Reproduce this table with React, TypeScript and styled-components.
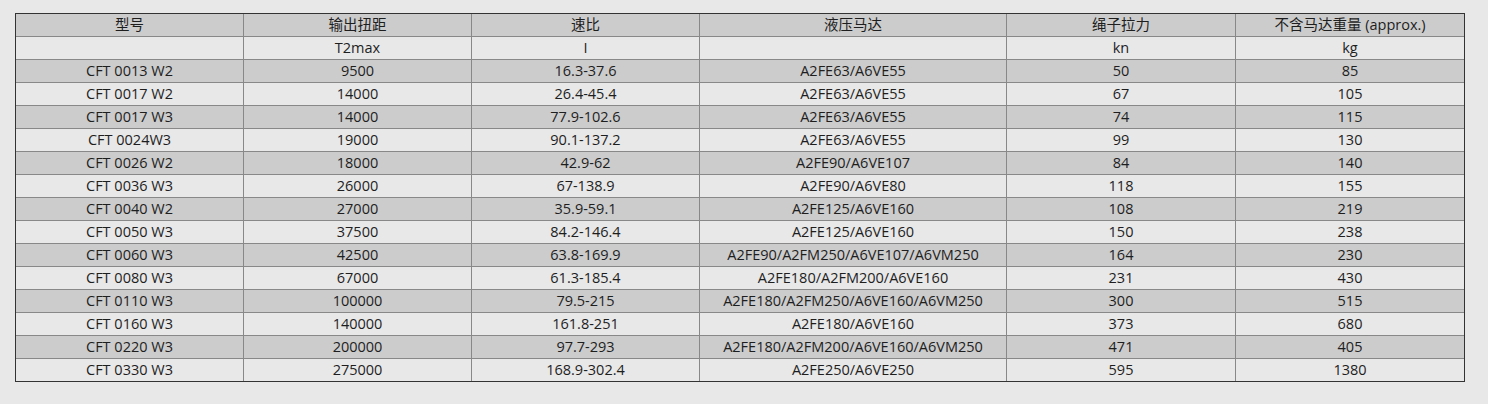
import React from 'react';
import styled, {createGlobalStyle} from "styled-components";

const GlobalStyle = createGlobalStyle`
    html, body {
        margin: 0;
        padding: 0;
        background-color: #E8E8E8;
    }
`;

type Row = [string, string, string, string, string, string];

const rows: Row[] = [
    ["CFT 0013 W2", "9500", "16.3-37.6", "A2FE63/A6VE55", "50", "85"],
    ["CFT 0017 W2", "14000", "26.4-45.4", "A2FE63/A6VE55", "67", "105"],
    ["CFT 0017 W3", "14000", "77.9-102.6", "A2FE63/A6VE55", "74", "115"],
    ["CFT 0024W3", "19000", "90.1-137.2", "A2FE63/A6VE55", "99", "130"],
    ["CFT 0026 W2", "18000", "42.9-62", "A2FE90/A6VE107", "84", "140"],
    ["CFT 0036 W3", "26000", "67-138.9", "A2FE90/A6VE80", "118", "155"],
    ["CFT 0040 W2", "27000", "35.9-59.1", "A2FE125/A6VE160", "108", "219"],
    ["CFT 0050 W3", "37500", "84.2-146.4", "A2FE125/A6VE160", "150", "238"],
    ["CFT 0060 W3", "42500", "63.8-169.9", "A2FE90/A2FM250/A6VE107/A6VM250", "164", "230"],
    ["CFT 0080 W3", "67000", "61.3-185.4", "A2FE180/A2FM200/A6VE160", "231", "430"],
    ["CFT 0110 W3", "100000", "79.5-215", "A2FE180/A2FM250/A6VE160/A6VM250", "300", "515"],
    ["CFT 0160 W3", "140000", "161.8-251", "A2FE180/A6VE160", "373", "680"],
    ["CFT 0220 W3", "200000", "97.7-293", "A2FE180/A2FM200/A6VE160/A6VM250", "471", "405"],
    ["CFT 0330 W3", "275000", "168.9-302.4", "A2FE250/A6VE250", "595", "1380"],
];

const headers: Row = ["型号", "输出扭距", "速比", "液压马达", "绳子拉力", "不含马达重量 (approx.)"];
const units: Row = ["", "T2max", "I", "", "kn", "kg"];
const colWidths = [228, 228, 228, 307, 229, 228];

export default function App() {
    return (
        <StyledPage>
            <GlobalStyle/>
            <StyledTable>
                <colgroup>
                    {colWidths.map((w, i) => <col key={i} width={w}/>)}
                </colgroup>
                <tbody>
                <StyledRow dark>
                    {headers.map((h, i) => <StyledCell key={i}>{h}</StyledCell>)}
                </StyledRow>
                <StyledRow>
                    {units.map((u, i) => <StyledCell key={i}>{u}</StyledCell>)}
                </StyledRow>
                {rows.map((r, i) => (
                    <StyledRow key={r[0] + i} dark={i % 2 === 0}>
                        {r.map((c, j) => <StyledCell key={j}>{c}</StyledCell>)}
                    </StyledRow>
                ))}
                </tbody>
            </StyledTable>
        </StyledPage>
    );
}

const StyledPage = styled.div`
    padding: 13px 0 0 15px;
    min-height: 404px;
    box-sizing: border-box;
    font-family: "Open Sans", "Noto Sans CJK SC", sans-serif;
`;

const StyledTable = styled.table`
    width: 1450px;
    table-layout: fixed;
    border-collapse: separate;
    border-spacing: 0;
    border: 1px solid #333333;
`;

const StyledRow = styled.tr<{ dark?: boolean }>`
    background-color: ${props => props.dark ? "#CCCCCC" : "#E8E8E8"};

    &:last-child td {
        border-bottom: none;
        height: 22px;
    }
`;

const StyledCell = styled.td`
    box-sizing: border-box;
    height: 23px;
    padding: 0;
    border-right: 1px solid #888888;
    border-bottom: 1px solid #888888;
    text-align: center;
    font-size: 14.5px;
    line-height: 22px;
    color: #1E1E1E;
    white-space: nowrap;

    &:last-child {
        border-right: none;
    }
`;
